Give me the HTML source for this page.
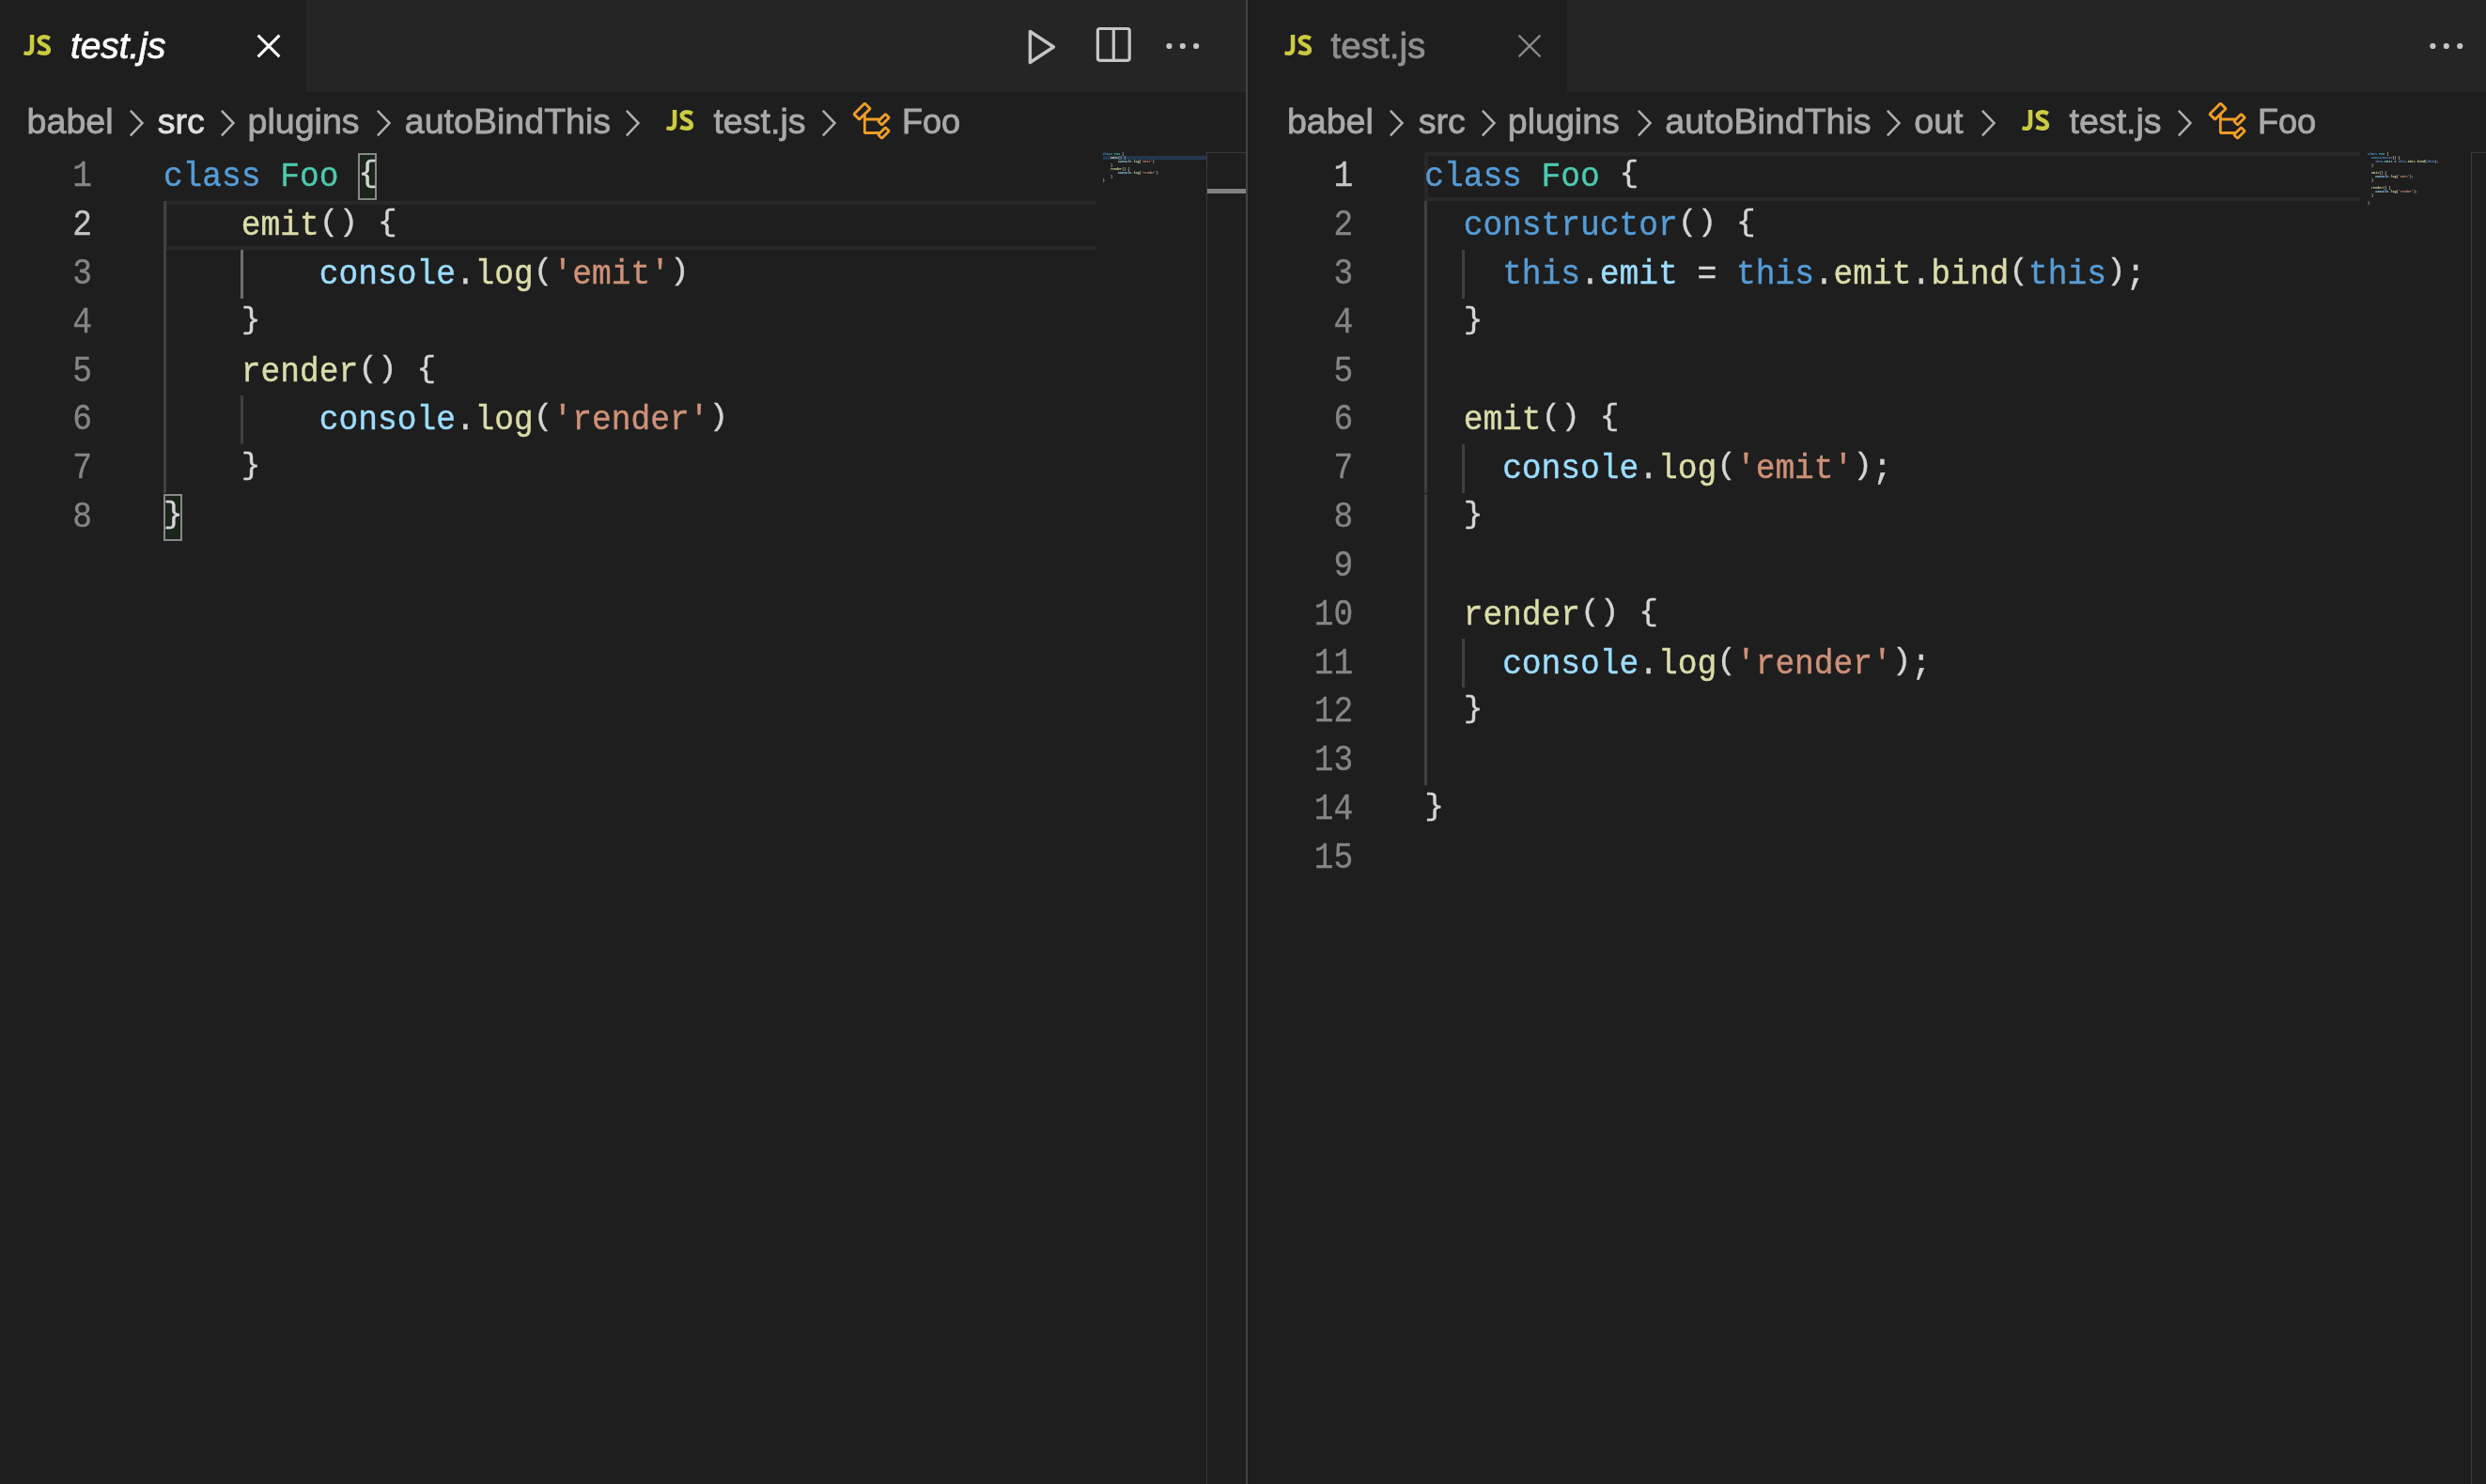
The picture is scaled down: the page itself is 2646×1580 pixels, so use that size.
<!DOCTYPE html>
<html><head><meta charset="utf-8">
<style>
*{margin:0;padding:0;box-sizing:border-box}
html,body{width:2646px;height:1580px;overflow:hidden;background:#1e1e1e}
body{position:relative;font-family:"Liberation Sans",sans-serif}
.a{position:absolute}
.tabs{top:0;height:98px;background:#252526}
.tab{top:0;height:98px;background:#1e1e1e}
.tl{top:0;height:98px;line-height:98px;font-size:38px;white-space:pre;-webkit-text-stroke:0.8px currentColor}
.bc{top:97px;height:64px;line-height:64px;font-size:37.6px;color:#a9a9a9;white-space:pre;-webkit-text-stroke:0.8px currentColor}
.code{font-family:"Liberation Mono",monospace;font-size:34.56px;line-height:51.84px;height:51.84px;white-space:pre;color:#d4d4d4;transform:scaleY(1.05);transform-origin:0 35px;-webkit-text-stroke:0.4px currentColor}
.ln{font-family:"Liberation Mono",monospace;font-size:34.56px;line-height:51.84px;height:51.84px;white-space:pre;color:#858585;text-align:right;width:100px;transform:scaleY(1.14);transform-origin:0 36px;-webkit-text-stroke:0.3px currentColor}
.k{color:#569cd6}.c{color:#4ec9b0}.f{color:#dcdcaa}.v{color:#9cdcfe}.s{color:#ce9178}
.ig{width:2.7px;background:#404040}
.b{display:inline-block;transform:scaleY(0.87);transform-origin:50% 0}
.mm{font-family:"Liberation Mono",monospace;font-size:3.4px;line-height:4px;height:4px;white-space:pre;color:#d4d4d4;font-weight:bold}
</style></head><body><div id="root" style="position:absolute;left:0;top:0;width:2646px;height:1580px;will-change:transform">
<div class="a tabs" style="left:0;width:1326px"></div>
<div class="a tab" style="left:0;width:326px"></div>
<div class="a tabs" style="left:1328px;width:1318px"></div>
<div class="a tab" style="left:1328px;width:340px"></div>
<div class="a" style="left:1326px;top:0;width:2px;height:1580px;background:#444"></div>
<svg class="a" style="left:25.3px;top:37.0px;overflow:visible" width="30" height="23" viewBox="0 0 30 23"><path fill="#cbcb41" d="M6.8 0H11.3V14.2C11.3 19.4 8.6 22.1 4.3 22.1C2.8 22.1 1.3 21.8 0 21.3L0.9 17.2C1.8 17.6 2.8 17.8 3.8 17.8C5.8 17.8 6.8 16.8 6.8 14.4Z"/><path fill="none" stroke="#cbcb41" stroke-width="4.5" d="M27.9 3.9C25.8 2.8 23.8 2.25 21.9 2.25C18.9 2.25 16.8 3.8 16.8 6.1C16.8 8.6 19.1 9.7 22 10.9C25.2 12.3 26.9 13.7 26.9 16.3C26.9 19 24.5 19.85 21.6 19.85C19.5 19.85 17.4 19.3 15.2 18.3"/></svg>
<div class="a tl" style="left:75px;font-size:38.8px;color:#fff;font-style:italic">test.js</div>
<svg class="a" style="left:270.6px;top:34.1px" width="30" height="30" viewBox="0 0 30 30"><path d="M3.60 3.60L26.40 26.40M26.40 3.60L3.60 26.40" stroke="#ffffff" stroke-width="2.9" fill="none"/></svg>
<svg class="a" style="left:1367.3px;top:37.0px;overflow:visible" width="30" height="23" viewBox="0 0 30 23"><path fill="#cbcb41" d="M6.8 0H11.3V14.2C11.3 19.4 8.6 22.1 4.3 22.1C2.8 22.1 1.3 21.8 0 21.3L0.9 17.2C1.8 17.6 2.8 17.8 3.8 17.8C5.8 17.8 6.8 16.8 6.8 14.4Z"/><path fill="none" stroke="#cbcb41" stroke-width="4.5" d="M27.9 3.9C25.8 2.8 23.8 2.25 21.9 2.25C18.9 2.25 16.8 3.8 16.8 6.1C16.8 8.6 19.1 9.7 22 10.9C25.2 12.3 26.9 13.7 26.9 16.3C26.9 19 24.5 19.85 21.6 19.85C19.5 19.85 17.4 19.3 15.2 18.3"/></svg>
<div class="a tl" style="left:1416.5px;font-size:38.6px;color:#8f8f8f">test.js</div>
<svg class="a" style="left:1612.5px;top:34.1px" width="30" height="30" viewBox="0 0 30 30"><path d="M3.60 3.60L26.40 26.40M26.40 3.60L3.60 26.40" stroke="#8b8b8b" stroke-width="2.2" fill="none"/></svg>
<svg class="a" style="left:1080px;top:20px" width="220" height="60" viewBox="1080 20 220 60"><path d="M1096.4 33.5 L1121.4 50 L1096.4 66.5 Z" stroke="#c5c5c5" stroke-width="3.4" fill="none" stroke-linejoin="round"/><rect x="1168.4" y="30.5" width="33.8" height="33.8" rx="2.2" stroke="#c5c5c5" stroke-width="3.2" fill="none"/><line x1="1185.3" y1="30.5" x2="1185.3" y2="64.3" stroke="#c5c5c5" stroke-width="3.2"/><circle cx="1244.4" cy="49" r="3.1" fill="#c5c5c5"/><circle cx="1258.8" cy="49" r="3.1" fill="#c5c5c5"/><circle cx="1273.1" cy="49" r="3.1" fill="#c5c5c5"/></svg>
<svg class="a" style="left:2570px;top:30px" width="70" height="40" viewBox="2570 30 70 40"><circle cx="2589.4" cy="49" r="3.1" fill="#c5c5c5"/><circle cx="2603.8" cy="49" r="3.1" fill="#c5c5c5"/><circle cx="2618.2" cy="49" r="3.1" fill="#c5c5c5"/></svg>
<div class="a bc" style="left:28.6px">babel</div>
<svg class="a" style="left:136.0px;top:112px" width="24" height="38" viewBox="0 0 24 38"><path d="M2.9 5.9 L15.5 19.1 L2.9 32.3" stroke="#b0b0b0" stroke-width="2.5" fill="none"/></svg>
<div class="a bc" style="left:167.8px;color:#e0e0e0">src</div>
<svg class="a" style="left:233.0px;top:112px" width="24" height="38" viewBox="0 0 24 38"><path d="M2.9 5.9 L15.5 19.1 L2.9 32.3" stroke="#b0b0b0" stroke-width="2.5" fill="none"/></svg>
<div class="a bc" style="left:263.5px">plugins</div>
<svg class="a" style="left:399.0px;top:112px" width="24" height="38" viewBox="0 0 24 38"><path d="M2.9 5.9 L15.5 19.1 L2.9 32.3" stroke="#b0b0b0" stroke-width="2.5" fill="none"/></svg>
<div class="a bc" style="left:430.8px">autoBindThis</div>
<svg class="a" style="left:664.0px;top:112px" width="24" height="38" viewBox="0 0 24 38"><path d="M2.9 5.9 L15.5 19.1 L2.9 32.3" stroke="#b0b0b0" stroke-width="2.5" fill="none"/></svg>
<svg class="a" style="left:709.1px;top:117.0px;overflow:visible" width="30" height="23" viewBox="0 0 30 23"><path fill="#cbcb41" d="M6.8 0H11.3V14.2C11.3 19.4 8.6 22.1 4.3 22.1C2.8 22.1 1.3 21.8 0 21.3L0.9 17.2C1.8 17.6 2.8 17.8 3.8 17.8C5.8 17.8 6.8 16.8 6.8 14.4Z"/><path fill="none" stroke="#cbcb41" stroke-width="4.5" d="M27.9 3.9C25.8 2.8 23.8 2.25 21.9 2.25C18.9 2.25 16.8 3.8 16.8 6.1C16.8 8.6 19.1 9.7 22 10.9C25.2 12.3 26.9 13.7 26.9 16.3C26.9 19 24.5 19.85 21.6 19.85C19.5 19.85 17.4 19.3 15.2 18.3"/></svg>
<div class="a bc" style="left:759.4px">test.js</div>
<svg class="a" style="left:873.0px;top:112px" width="24" height="38" viewBox="0 0 24 38"><path d="M2.9 5.9 L15.5 19.1 L2.9 32.3" stroke="#b0b0b0" stroke-width="2.5" fill="none"/></svg>
<svg class="a" style="left:905.0px;top:106.0px" width="46" height="46" viewBox="0 0 16 16"><path fill="#ee9d28" d="M11.34 9.71h.71l2.67-2.67v-.71L13.38 5h-.7l-1.82 1.81h-5V5.56l1.86-1.85V3l-2-2H5L1 5v.71l2 2h.71l1.14-1.15v5.79l.5.5H10v.52l1.33 1.34h.71l2.67-2.67v-.71L13.37 10h-.7l-1.86 1.85h-5v-4H10v.48l1.34 1.38zm1.69-3.65l.63.63-2 2-.63-.63 2-2zm0 5l.63.63-2 2-.63-.63 2-2zM3.35 6.65l-1.29-1.3 3.29-3.29 1.3 1.29-3.3 3.3z"/></svg>
<div class="a bc" style="left:959.8px;transform:scaleX(0.96);transform-origin:0 0">Foo</div>
<div class="a bc" style="left:1369.9px">babel</div>
<svg class="a" style="left:1477.4px;top:112px" width="24" height="38" viewBox="0 0 24 38"><path d="M2.9 5.9 L15.5 19.1 L2.9 32.3" stroke="#b0b0b0" stroke-width="2.5" fill="none"/></svg>
<div class="a bc" style="left:1509.7px">src</div>
<svg class="a" style="left:1575.0px;top:112px" width="24" height="38" viewBox="0 0 24 38"><path d="M2.9 5.9 L15.5 19.1 L2.9 32.3" stroke="#b0b0b0" stroke-width="2.5" fill="none"/></svg>
<div class="a bc" style="left:1604.8px">plugins</div>
<svg class="a" style="left:1741.0px;top:112px" width="24" height="38" viewBox="0 0 24 38"><path d="M2.9 5.9 L15.5 19.1 L2.9 32.3" stroke="#b0b0b0" stroke-width="2.5" fill="none"/></svg>
<div class="a bc" style="left:1772.3px">autoBindThis</div>
<svg class="a" style="left:2006.2px;top:112px" width="24" height="38" viewBox="0 0 24 38"><path d="M2.9 5.9 L15.5 19.1 L2.9 32.3" stroke="#b0b0b0" stroke-width="2.5" fill="none"/></svg>
<div class="a bc" style="left:2037.3px">out</div>
<svg class="a" style="left:2106.7px;top:112px" width="24" height="38" viewBox="0 0 24 38"><path d="M2.9 5.9 L15.5 19.1 L2.9 32.3" stroke="#b0b0b0" stroke-width="2.5" fill="none"/></svg>
<svg class="a" style="left:2151.5px;top:117.0px;overflow:visible" width="30" height="23" viewBox="0 0 30 23"><path fill="#cbcb41" d="M6.8 0H11.3V14.2C11.3 19.4 8.6 22.1 4.3 22.1C2.8 22.1 1.3 21.8 0 21.3L0.9 17.2C1.8 17.6 2.8 17.8 3.8 17.8C5.8 17.8 6.8 16.8 6.8 14.4Z"/><path fill="none" stroke="#cbcb41" stroke-width="4.5" d="M27.9 3.9C25.8 2.8 23.8 2.25 21.9 2.25C18.9 2.25 16.8 3.8 16.8 6.1C16.8 8.6 19.1 9.7 22 10.9C25.2 12.3 26.9 13.7 26.9 16.3C26.9 19 24.5 19.85 21.6 19.85C19.5 19.85 17.4 19.3 15.2 18.3"/></svg>
<div class="a bc" style="left:2202.5px">test.js</div>
<svg class="a" style="left:2315.9px;top:112px" width="24" height="38" viewBox="0 0 24 38"><path d="M2.9 5.9 L15.5 19.1 L2.9 32.3" stroke="#b0b0b0" stroke-width="2.5" fill="none"/></svg>
<svg class="a" style="left:2348.3px;top:106.0px" width="46" height="46" viewBox="0 0 16 16"><path fill="#ee9d28" d="M11.34 9.71h.71l2.67-2.67v-.71L13.38 5h-.7l-1.82 1.81h-5V5.56l1.86-1.85V3l-2-2H5L1 5v.71l2 2h.71l1.14-1.15v5.79l.5.5H10v.52l1.33 1.34h.71l2.67-2.67v-.71L13.37 10h-.7l-1.86 1.85h-5v-4H10v.48l1.34 1.38zm1.69-3.65l.63.63-2 2-.63-.63 2-2zm0 5l.63.63-2 2-.63-.63 2-2zM3.35 6.65l-1.29-1.3 3.29-3.29 1.3 1.29-3.3 3.3z"/></svg>
<div class="a bc" style="left:2402.7px;transform:scaleX(0.96);transform-origin:0 0">Foo</div>
<div class="a" style="left:173.9px;top:213.84px;width:992.1px;height:51.84px;border:4px solid #282828;border-right:none"></div>
<div class="a" style="left:174px;top:213.84px;width:3px;height:311.04px;background:#404040"></div>
<div class="a" style="left:256px;top:265.68px;width:3px;height:51.84px;background:#707070"></div>
<div class="a" style="left:256px;top:421.20px;width:3px;height:51.84px;background:#404040"></div>
<div class="a" style="left:381.26px;top:163.20px;width:20.24px;height:49.84px;border:2.6px solid #888;background:#1b251b"></div>
<div class="a" style="left:173.90px;top:526.08px;width:20.24px;height:49.84px;border:2.6px solid #888;background:#1b251b"></div>
<div class="a ln" style="left:-2.1px;top:163.20px;">1</div>
<div class="a code" style="left:173.90px;top:163.20px"><span class="k">class</span> <span class="c">Foo</span> <span class="b">{</span></div>
<div class="a ln" style="left:-2.1px;top:215.04px;color:#c6c6c6">2</div>
<div class="a code" style="left:173.90px;top:215.04px">    <span class="f">emit</span><span class="b">(</span><span class="b">)</span> <span class="b">{</span></div>
<div class="a ln" style="left:-2.1px;top:266.88px;">3</div>
<div class="a code" style="left:173.90px;top:266.88px">        <span class="v">console</span>.<span class="f">log</span><span class="b">(</span><span class="s">'emit'</span><span class="b">)</span></div>
<div class="a ln" style="left:-2.1px;top:318.72px;">4</div>
<div class="a code" style="left:173.90px;top:318.72px">    <span class="b">}</span></div>
<div class="a ln" style="left:-2.1px;top:370.56px;">5</div>
<div class="a code" style="left:173.90px;top:370.56px">    <span class="f">render</span><span class="b">(</span><span class="b">)</span> <span class="b">{</span></div>
<div class="a ln" style="left:-2.1px;top:422.40px;">6</div>
<div class="a code" style="left:173.90px;top:422.40px">        <span class="v">console</span>.<span class="f">log</span><span class="b">(</span><span class="s">'render'</span><span class="b">)</span></div>
<div class="a ln" style="left:-2.1px;top:474.24px;">7</div>
<div class="a code" style="left:173.90px;top:474.24px">    <span class="b">}</span></div>
<div class="a ln" style="left:-2.1px;top:526.08px;">8</div>
<div class="a code" style="left:173.90px;top:526.08px"><span class="b">}</span></div>
<div class="a" style="left:1516.2px;top:162.00px;width:995.8px;height:51.84px;border:4px solid #282828;border-right:none"></div>
<div class="a" style="left:1516px;top:213.84px;width:3px;height:311.04px;background:#404040"></div>
<div class="a" style="left:1516px;top:525.92px;width:3px;height:310.00px;background:#404040"></div>
<div class="a" style="left:1556px;top:265.68px;width:3px;height:51.84px;background:#404040"></div>
<div class="a" style="left:1556px;top:473.04px;width:3px;height:51.84px;background:#404040"></div>
<div class="a" style="left:1556px;top:680.40px;width:3px;height:51.84px;background:#404040"></div>
<div class="a ln" style="left:1340.2px;top:163.20px;color:#c6c6c6">1</div>
<div class="a code" style="left:1516.20px;top:163.20px"><span class="k">class</span> <span class="c">Foo</span> <span class="b">{</span></div>
<div class="a ln" style="left:1340.2px;top:215.04px;">2</div>
<div class="a code" style="left:1516.20px;top:215.04px">  <span class="k">constructor</span><span class="b">(</span><span class="b">)</span> <span class="b">{</span></div>
<div class="a ln" style="left:1340.2px;top:266.88px;">3</div>
<div class="a code" style="left:1516.20px;top:266.88px">    <span class="k">this</span>.<span class="v">emit</span> = <span class="k">this</span>.<span class="f">emit</span>.<span class="f">bind</span><span class="b">(</span><span class="k">this</span><span class="b">)</span>;</div>
<div class="a ln" style="left:1340.2px;top:318.72px;">4</div>
<div class="a code" style="left:1516.20px;top:318.72px">  <span class="b">}</span></div>
<div class="a ln" style="left:1340.2px;top:370.56px;">5</div>
<div class="a code" style="left:1516.20px;top:370.56px"></div>
<div class="a ln" style="left:1340.2px;top:422.40px;">6</div>
<div class="a code" style="left:1516.20px;top:422.40px">  <span class="f">emit</span><span class="b">(</span><span class="b">)</span> <span class="b">{</span></div>
<div class="a ln" style="left:1340.2px;top:474.24px;">7</div>
<div class="a code" style="left:1516.20px;top:474.24px">    <span class="v">console</span>.<span class="f">log</span><span class="b">(</span><span class="s">'emit'</span><span class="b">)</span>;</div>
<div class="a ln" style="left:1340.2px;top:526.08px;">8</div>
<div class="a code" style="left:1516.20px;top:526.08px">  <span class="b">}</span></div>
<div class="a ln" style="left:1340.2px;top:577.92px;">9</div>
<div class="a code" style="left:1516.20px;top:577.92px"></div>
<div class="a ln" style="left:1340.2px;top:629.76px;">10</div>
<div class="a code" style="left:1516.20px;top:629.76px">  <span class="f">render</span><span class="b">(</span><span class="b">)</span> <span class="b">{</span></div>
<div class="a ln" style="left:1340.2px;top:681.60px;">11</div>
<div class="a code" style="left:1516.20px;top:681.60px">    <span class="v">console</span>.<span class="f">log</span><span class="b">(</span><span class="s">'render'</span><span class="b">)</span>;</div>
<div class="a ln" style="left:1340.2px;top:733.44px;">12</div>
<div class="a code" style="left:1516.20px;top:733.44px">  <span class="b">}</span></div>
<div class="a ln" style="left:1340.2px;top:785.28px;">13</div>
<div class="a code" style="left:1516.20px;top:785.28px"></div>
<div class="a ln" style="left:1340.2px;top:837.12px;">14</div>
<div class="a code" style="left:1516.20px;top:837.12px"><span class="b">}</span></div>
<div class="a ln" style="left:1340.2px;top:888.96px;">15</div>
<div class="a code" style="left:1516.20px;top:888.96px"></div>
<div class="a" style="left:1173.8px;top:166.0px;width:110.1px;height:4px;background:#24364d"></div>
<div class="a mm" style="left:1173.8px;top:162.0px"><span class="k">class</span> <span class="c">Foo</span> {</div>
<div class="a mm" style="left:1173.8px;top:166.0px">    <span class="f">emit</span>() {</div>
<div class="a mm" style="left:1173.8px;top:170.0px">        <span class="v">console</span>.<span class="f">log</span>(<span class="s">'emit'</span>)</div>
<div class="a mm" style="left:1173.8px;top:174.0px">    }</div>
<div class="a mm" style="left:1173.8px;top:178.0px">    <span class="f">render</span>() {</div>
<div class="a mm" style="left:1173.8px;top:182.0px">        <span class="v">console</span>.<span class="f">log</span>(<span class="s">'render'</span>)</div>
<div class="a mm" style="left:1173.8px;top:186.0px">    }</div>
<div class="a mm" style="left:1173.8px;top:190.0px">}</div>
<div class="a mm" style="left:2520.0px;top:162.0px"><span class="k">class</span> <span class="c">Foo</span> {</div>
<div class="a mm" style="left:2520.0px;top:166.0px">  <span class="k">constructor</span>() {</div>
<div class="a mm" style="left:2520.0px;top:170.0px">    <span class="k">this</span>.<span class="v">emit</span> = <span class="k">this</span>.<span class="f">emit</span>.<span class="f">bind</span>(<span class="k">this</span>);</div>
<div class="a mm" style="left:2520.0px;top:174.0px">  }</div>
<div class="a mm" style="left:2520.0px;top:178.0px"></div>
<div class="a mm" style="left:2520.0px;top:182.0px">  <span class="f">emit</span>() {</div>
<div class="a mm" style="left:2520.0px;top:186.0px">    <span class="v">console</span>.<span class="f">log</span>(<span class="s">'emit'</span>);</div>
<div class="a mm" style="left:2520.0px;top:190.0px">  }</div>
<div class="a mm" style="left:2520.0px;top:194.0px"></div>
<div class="a mm" style="left:2520.0px;top:198.0px">  <span class="f">render</span>() {</div>
<div class="a mm" style="left:2520.0px;top:202.0px">    <span class="v">console</span>.<span class="f">log</span>(<span class="s">'render'</span>);</div>
<div class="a mm" style="left:2520.0px;top:206.0px">  }</div>
<div class="a mm" style="left:2520.0px;top:210.0px"></div>
<div class="a mm" style="left:2520.0px;top:214.0px">}</div>
<div class="a mm" style="left:2520.0px;top:218.0px"></div>
<div class="a" style="left:1283.9px;top:162px;width:1.2px;height:1418px;background:#3a3a3a"></div>
<div class="a" style="left:1283.9px;top:162px;width:42.2px;height:1.2px;background:#3a3a3a"></div>
<div class="a" style="left:1285.1px;top:201px;width:41px;height:5.1px;background:#828282"></div>
<div class="a" style="left:2630px;top:162px;width:1.2px;height:1418px;background:#3a3a3a"></div>
<div class="a" style="left:2630px;top:162px;width:16px;height:1.2px;background:#3a3a3a"></div>
</div></body></html>
